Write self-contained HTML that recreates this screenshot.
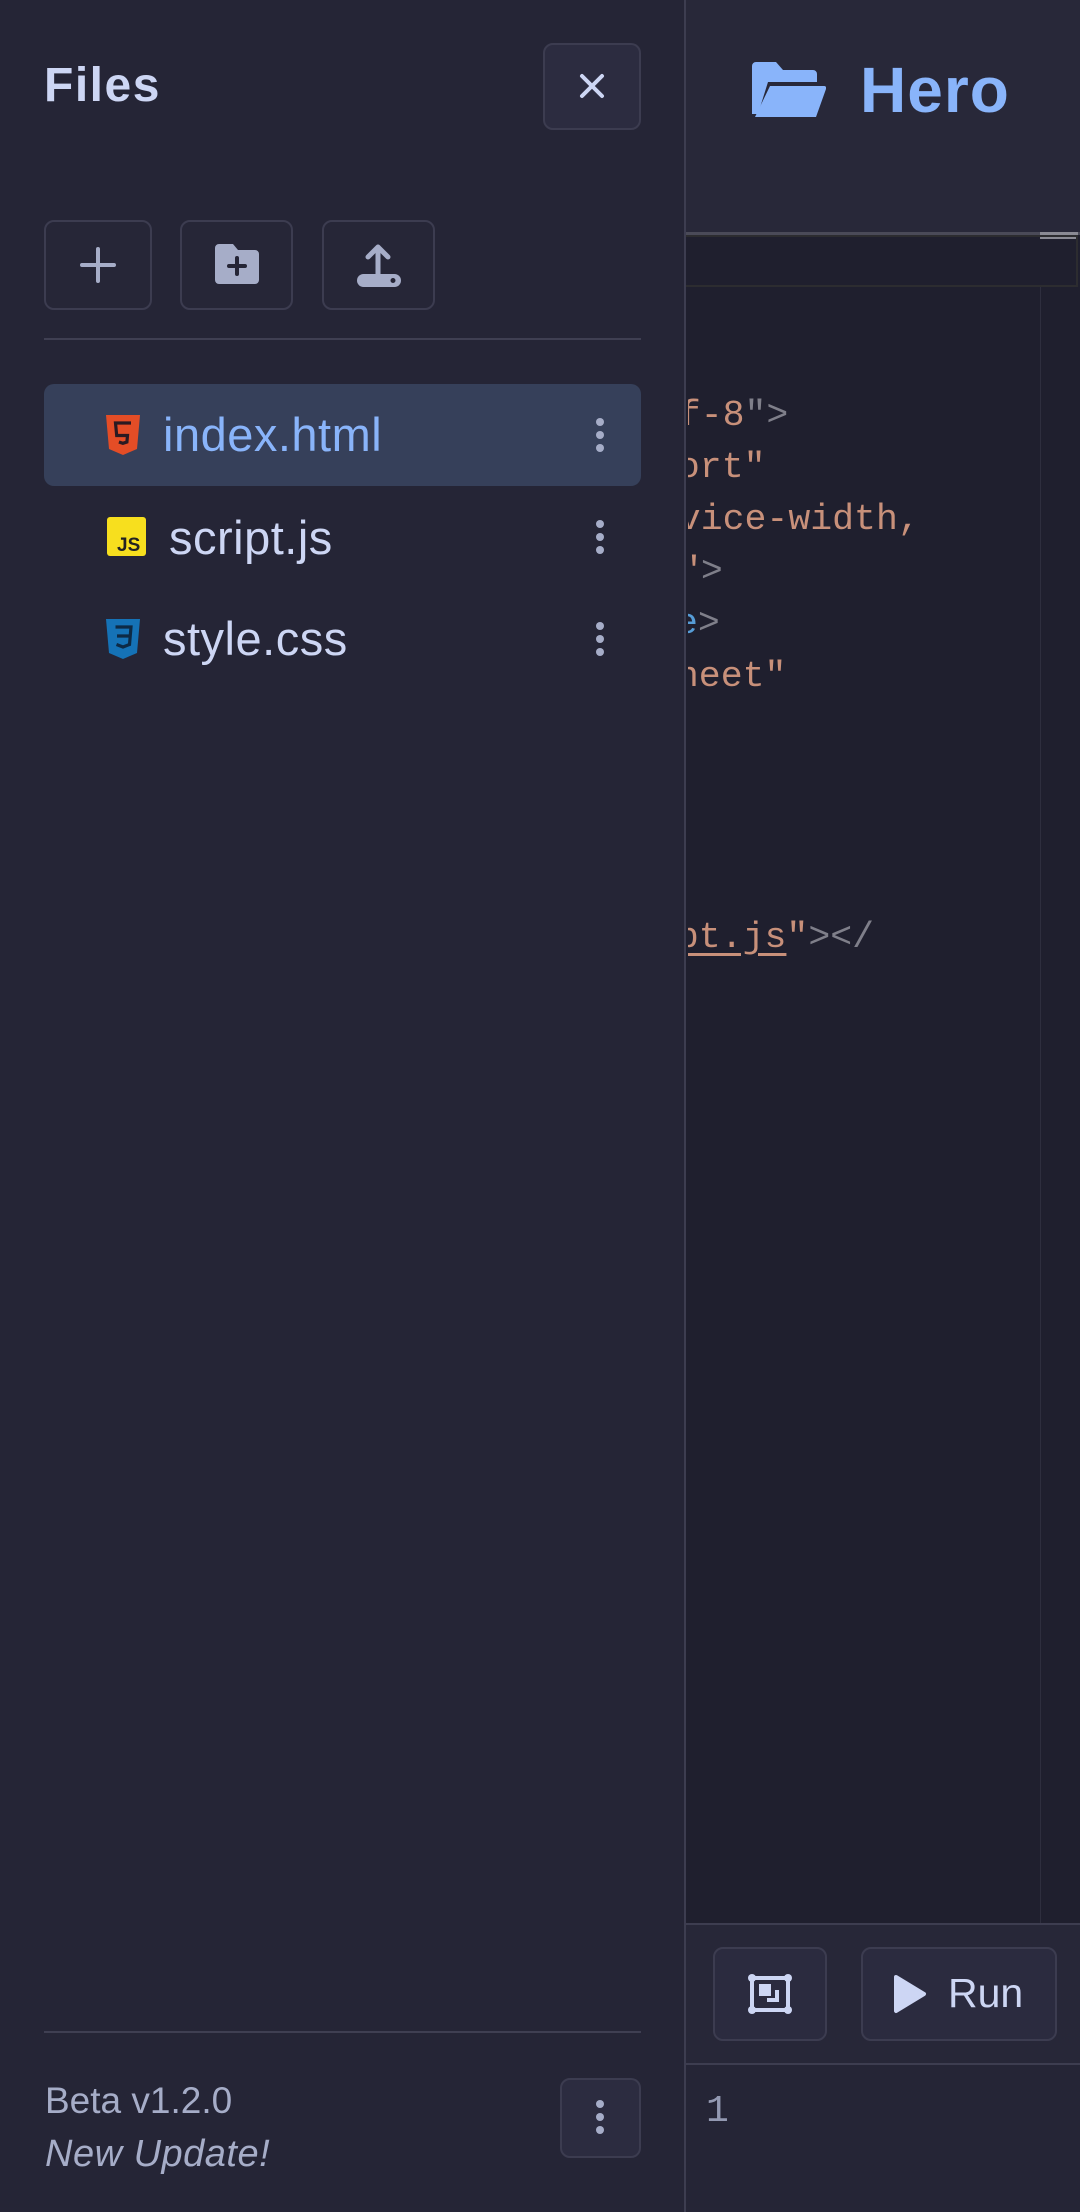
<!DOCTYPE html>
<html><head><meta charset="utf-8"><style>
*{margin:0;padding:0;box-sizing:border-box}
body{width:1080px;height:2212px;overflow:hidden;background:#1f1f2e;font-family:"Liberation Sans",sans-serif;position:relative}
.abs{position:absolute}
#side{left:0;top:0;width:686px;height:2212px;background:#252536;border-right:2px solid #3d3d50}
.btn{position:absolute;border:2px solid #3c3c50;border-radius:10px;background:#262637}
.code{position:absolute;font-family:"Liberation Mono",monospace;font-size:36.5px;white-space:pre;line-height:52px;color:#c8907a}
.g{color:#7f7f8a}
.fname{position:absolute;font-size:47px;color:#cdd6f4;line-height:52px;letter-spacing:0.5px}
.keb{position:absolute;width:8px}
.keb i{display:block;width:8px;height:8px;border-radius:50%;background:#a6adc8;margin-bottom:5px}
</style></head><body>
<div class="abs" style="left:686px;top:0;width:394px;height:233px;background:#282839"></div>
<svg class="abs" style="left:752px;top:62px" width="74" height="57" viewBox="0 0 74 57"><path d="M4 0h20l7 8h30a4 4 0 0 1 4 4v8H16L6 52H0V4a4 4 0 0 1 4-4z" fill="#89b4fa"/><path d="M18 24h54a2 2 0 0 1 2 3L64 55H3z" fill="#89b4fa"/></svg>
<div class="abs" style="left:860px;top:50px;font-size:64px;font-weight:bold;color:#89b4fa;line-height:80px;letter-spacing:1px">Hero</div>
<div class="abs" style="left:686px;top:232px;width:394px;height:3px;background:#4a4a58"></div>
<div class="abs" style="left:1040px;top:232px;width:38px;height:7px;background:#8a8a94"></div>
<div class="abs" style="left:686px;top:235px;width:392px;height:52px;border:2px solid #2c2c30;border-left:none"></div>
<div class="abs" style="left:1040px;top:287px;width:1px;height:1636px;background:#2e2e3e"></div>
<div class="abs" style="left:688px;top:0;width:392px;height:2212px;overflow:hidden">
<div class="code" style="left:-53px;top:390px">utf-8<span class="g">"&gt;</span></div>
<div class="code" style="left:-32px;top:442px">port"</div>
<div class="code" style="left:-53px;top:494px">device-width,</div>
<div class="code" style="left:-9px;top:546px">"<span class="g">&gt;</span></div>
<div class="code" style="left:-12px;top:598px;color:#569cd6">e<span class="g">&gt;</span></div>
<div class="code" style="left:-33px;top:651px">sheet"</div>
<div class="code" style="left:-33px;top:912px"><span style="text-decoration:underline;text-underline-offset:6px">ipt.js</span>"<span class="g">&gt;&lt;/</span></div>
</div>
<div class="abs" style="left:686px;top:1923px;width:394px;height:2px;background:#3d3d50"></div>
<div class="abs" style="left:686px;top:1925px;width:394px;height:139px;background:#272738"></div>
<div class="btn" style="left:713px;top:1947px;width:114px;height:94px;background:#2b2b3f"></div>
<svg class="abs" style="left:747px;top:1974px" width="46" height="40" viewBox="0 0 46 40"><rect x="5" y="4" width="36" height="32" fill="none" stroke="#cdd6f4" stroke-width="4"/><circle cx="5" cy="4" r="4" fill="#cdd6f4"/><circle cx="41" cy="4" r="4" fill="#cdd6f4"/><circle cx="5" cy="36" r="4" fill="#cdd6f4"/><circle cx="41" cy="36" r="4" fill="#cdd6f4"/><rect x="12" y="10" width="12" height="12" fill="#cdd6f4"/><path d="M20 26h10V16" fill="none" stroke="#cdd6f4" stroke-width="4"/></svg>
<div class="btn" style="left:861px;top:1947px;width:196px;height:94px;background:#2b2b3f"></div>
<svg class="abs" style="left:893px;top:1974px" width="34" height="40" viewBox="0 0 34 40"><path d="M3 3L31 20L3 37z" fill="#cdd6f4" stroke="#cdd6f4" stroke-width="4" stroke-linejoin="round"/></svg>
<div class="abs" style="left:948px;top:1968px;font-size:41px;color:#cdd6f4;line-height:50px">Run</div>
<div class="abs" style="left:686px;top:2063px;width:394px;height:2px;background:#3d3d50"></div>
<div class="abs" style="left:686px;top:2065px;width:394px;height:147px;background:#252536"></div>
<div class="abs" style="left:706px;top:2090px;font-size:38px;color:#9399b2;font-family:'Liberation Mono',monospace">1</div>

<div id="side" class="abs">
<div class="abs" style="left:44px;top:58px;font-size:48px;font-weight:bold;color:#cdd6f4;letter-spacing:1.5px">Files</div>
<div class="btn" style="left:543px;top:43px;width:98px;height:87px;background:#2c2c40"></div>
<svg class="abs" style="left:578px;top:72px" width="28" height="28" viewBox="0 0 28 28"><path d="M4 4L24 24M24 4L4 24" stroke="#cdd6f4" stroke-width="4" stroke-linecap="round"/></svg>
<div class="btn" style="left:44px;top:220px;width:108px;height:90px"></div>
<svg class="abs" style="left:80px;top:247px" width="36" height="36" viewBox="0 0 36 36"><path d="M18 2V34M2 18H34" stroke="#a6adc8" stroke-width="4" stroke-linecap="round"/></svg>
<div class="btn" style="left:180px;top:220px;width:113px;height:90px"></div>
<svg class="abs" style="left:215px;top:244px" width="44" height="40" viewBox="0 0 44 40"><path d="M4 0h14l5 6h17a4 4 0 0 1 4 4v26a4 4 0 0 1-4 4H4a4 4 0 0 1-4-4V4a4 4 0 0 1 4-4z" fill="#a6adc8"/><path d="M22 14v16M14 22h16" stroke="#252536" stroke-width="4" stroke-linecap="round"/></svg>
<div class="btn" style="left:322px;top:220px;width:113px;height:90px"></div>
<svg class="abs" style="left:356px;top:242px" width="46" height="46" viewBox="0 0 46 46"><path d="M22 32V6M12 15L22 5L32 15" fill="none" stroke="#a6adc8" stroke-width="5" stroke-linecap="round" stroke-linejoin="round"/><rect x="1" y="32" width="44" height="13" rx="6.5" fill="#a6adc8"/><circle cx="37" cy="38.5" r="2.5" fill="#252536"/></svg>
<div class="abs" style="left:44px;top:338px;width:597px;height:2px;background:#3f3f52"></div>
<div class="abs" style="left:44px;top:384px;width:597px;height:102px;background:#36405a;border-radius:10px"></div>
<svg class="abs" style="left:106px;top:415px" width="34" height="40" viewBox="0 0 34 40"><path d="M0 0h34l-3 34-14 6-14-6z" fill="#e44d26"/><path d="M25 8H9.5l1.2 12.5H21.5l-.6 6.5-4 1.3-4-1.3" fill="none" stroke="#2a1a22" stroke-width="3.2"/></svg>
<div class="fname" style="left:163px;top:409px;color:#89b4fa">index.html</div>
<svg class="abs" style="left:107px;top:517px" width="39" height="39" viewBox="0 0 39 39"><rect width="39" height="39" rx="3" fill="#f7df1e"/><text x="10" y="34" font-family="Liberation Sans,sans-serif" font-weight="bold" font-size="19" fill="#222">JS</text></svg>
<div class="fname" style="left:169px;top:512px">script.js</div>
<svg class="abs" style="left:106px;top:619px" width="34" height="40" viewBox="0 0 34 40"><path d="M0 0h34l-3 34-14 6-14-6z" fill="#1572b6"/><path d="M9.5 8H25l-1.5 17.5-6.5 2.5-6.5-2.5M11 17h13" fill="none" stroke="#0d2a45" stroke-width="3.2"/></svg>
<div class="fname" style="left:163px;top:613px">style.css</div>
<div class="keb" style="left:596px;top:418px"><i></i><i></i><i></i></div>
<div class="keb" style="left:596px;top:520px"><i></i><i></i><i></i></div>
<div class="keb" style="left:596px;top:622px"><i></i><i></i><i></i></div>
<div class="abs" style="left:44px;top:2031px;width:597px;height:2px;background:#3f3f52"></div>
<div class="abs" style="left:45px;top:2079px;font-size:37px;color:#a6adc8;line-height:44px">Beta v1.2.0</div>
<div class="abs" style="left:45px;top:2132px;font-size:38px;color:#a6adc8;font-style:italic;line-height:44px;letter-spacing:0.5px">New Update!</div>
<div class="btn" style="left:560px;top:2078px;width:81px;height:80px;background:#2c2c40"></div>
<div class="keb" style="left:596px;top:2100px"><i></i><i></i><i></i></div>
</div>
</body></html>
